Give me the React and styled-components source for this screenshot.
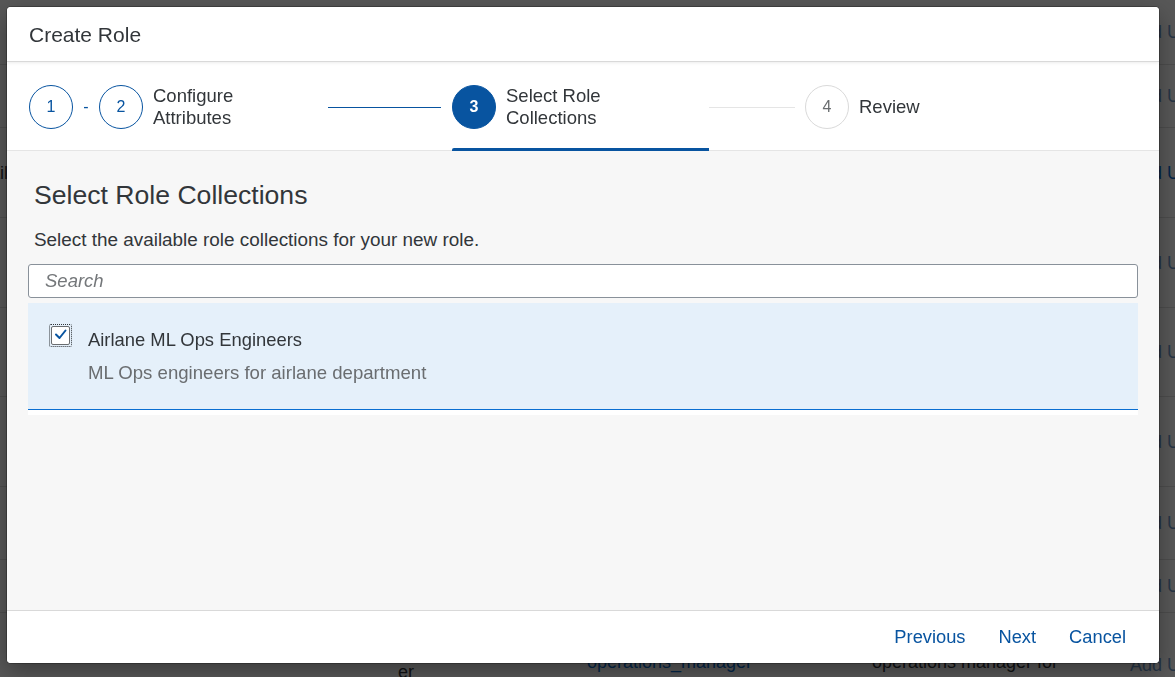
import React from "react";
import styled, { createGlobalStyle } from "styled-components";

const GlobalStyle = createGlobalStyle`
  html, body {
    margin: 0;
    padding: 0;
    width: 100%;
    height: 100%;
    overflow: hidden;
  }
  body {
    font-family: "Liberation Sans", Arial, sans-serif;
    background: #ffffff;
  }
`;

/* ---------- background page (behind the block layer) ---------- */
const Page = styled.div`
  width: 1175px;
  height: 677px;
  overflow: hidden;
  background: #ffffff;
`;

const BgRow = styled.div`
  display: grid;
  grid-template-columns: 436px 189px 285px 258px 1fr;
  margin-left: -38px;
  height: ${(p) => p.$h}px;
  box-sizing: border-box;
  align-items: ${(p) => (p.$top ? "start" : "center")};
  border-bottom: 1px solid #e0e0e0;
  font-size: 18px;
  line-height: 22px;
  color: #32363a;
`;

const BgCell = styled.div`
  padding-top: ${(p) => p.$pt || 0}px;
  white-space: nowrap;
`;

const BgLink = styled(BgCell)`
  color: ${(p) => (p.$strong ? "#0a6ed1" : "#6f9bcc")};
`;

const BlockLayer = styled.div`
  position: fixed;
  inset: 0;
  background: rgba(0, 0, 0, 0.66);
`;

/* ---------- dialog ---------- */
const Dialog = styled.div`
  position: fixed;
  left: 7px;
  top: 7px;
  width: 1152px;
  height: 656px;
  background: #ffffff;
  border-radius: 4px;
  overflow: hidden;
  display: flex;
  flex-direction: column;
  box-shadow: 0 0 0 1px rgba(0, 0, 0, 0.25), 0 8px 24px rgba(0, 0, 0, 0.35);
  color: #32363a;
  font-family: "Liberation Sans", Arial, sans-serif;
`;

const Header = styled.header`
  flex: none;
  height: 54px;
  box-sizing: border-box;
  display: flex;
  align-items: center;
  padding: 2px 0 0 22px;
  font-size: 21px;
  position: relative;
  z-index: 1;
  background: #ffffff;
  box-shadow: 0 1px 0 #d9d9d9, 0 2px 3px rgba(0, 0, 0, 0.08);
`;

const WizardNav = styled.nav`
  flex: none;
  height: 90px;
  box-sizing: border-box;
  display: flex;
  align-items: stretch;
  padding: 2px 0 0 22px;
  background: #ffffff;
  box-shadow: inset 0 -1px 0 #e5e5e5;
`;

const StepGroup = styled.div`
  flex: none;
  width: ${(p) => p.$w}px;
  display: flex;
  align-items: center;
  position: relative;
  &::after {
    content: "";
    display: ${(p) => (p.$active ? "block" : "none")};
    position: absolute;
    left: 0;
    right: 0;
    bottom: 0;
    height: 3px;
    background: #0854a0;
    border-top-left-radius: 2px;
  }
`;

const Circle = styled.span`
  flex: none;
  width: 44px;
  height: 44px;
  box-sizing: border-box;
  border-radius: 50%;
  display: flex;
  align-items: center;
  justify-content: center;
  font-size: 16px;
  font-weight: ${(p) => (p.$state === "current" ? 700 : 400)};
  border: 1px solid
    ${(p) => (p.$state === "pending" ? "#d9d9d9" : "#0854a0")};
  background: ${(p) => (p.$state === "current" ? "#0854a0" : "#ffffff")};
  color: ${(p) =>
    p.$state === "current"
      ? "#ffffff"
      : p.$state === "pending"
      ? "#6a6d70"
      : "#0854a0"};
`;

const Dash = styled.span`
  flex: none;
  width: 26px;
  text-align: center;
  color: #0854a0;
  font-size: 16px;
`;

const StepLabel = styled.span`
  margin-left: 10px;
  max-width: 110px;
  font-size: 18.5px;
  line-height: 22px;
  color: #32363a;
`;

const Connector = styled.span`
  flex: none;
  align-self: center;
  width: ${(p) => p.$w}px;
  height: 1px;
  margin-right: ${(p) => p.$mr}px;
  background: ${(p) => (p.$done ? "#0854a0" : "#e5e5e5")};
`;

const Content = styled.section`
  flex: 1;
  min-height: 0;
  background: #f7f7f7;
  padding: 29px 21px 0 21px;
  display: flex;
  flex-direction: column;
`;

const Title = styled.h2`
  margin: 0 0 0 6px;
  font-size: 26.6px;
  line-height: 30px;
  font-weight: 400;
  color: #32363a;
`;

const Description = styled.p`
  margin: 20px 0 0 6px;
  font-size: 18.9px;
  line-height: 20px;
  color: #32363a;
`;

const SearchInput = styled.input`
  margin-top: 14px;
  height: 34px;
  box-sizing: border-box;
  border: 1px solid #89919a;
  border-radius: 3px;
  background: #ffffff;
  padding: 0 16px;
  font-family: "Liberation Sans", Arial, sans-serif;
  font-size: 18.5px;
  color: #32363a;
  outline: none;
  &::placeholder {
    color: #74777a;
    font-style: italic;
  }
`;

const List = styled.ul`
  list-style: none;
  margin: 5px 0 0 0;
  padding: 0 0 5px 0;
  background: #ffffff;
`;

const ListItem = styled.li`
  height: 107px;
  box-sizing: border-box;
  display: flex;
  align-items: flex-start;
  padding: 21px 21px 0 21px;
  background: ${(p) => (p.$selected ? "#e5f0fa" : "#ffffff")};
  border-bottom: 1px solid ${(p) => (p.$selected ? "#0a6ed1" : "#e5e5e5")};
`;

const CheckOuter = styled.span`
  flex: none;
  width: 23px;
  height: 23px;
  box-sizing: border-box;
  border: 1px dotted #32363a;
  border-radius: 2px;
  display: flex;
  align-items: center;
  justify-content: center;
`;

const CheckInner = styled.span`
  width: 19px;
  height: 19px;
  box-sizing: border-box;
  border: 1px solid #6a6d70;
  border-radius: 2px;
  background: #ffffff;
  display: flex;
  align-items: center;
  justify-content: center;
`;

const ItemText = styled.div`
  margin: 5px 0 0 16px;
  display: flex;
  flex-direction: column;
  gap: 11px;
`;

const ItemTitle = styled.span`
  font-size: 18.4px;
  line-height: 22px;
  color: #32363a;
`;

const ItemDesc = styled.span`
  font-size: 18.6px;
  line-height: 22px;
  color: #6a6d70;
`;

const Footer = styled.footer`
  flex: none;
  height: 53px;
  box-sizing: border-box;
  border-top: 1px solid #d9d9d9;
  background: #ffffff;
  display: flex;
  align-items: center;
  justify-content: flex-end;
  gap: 17px;
  padding-right: 25px;
`;

const FooterButton = styled.button`
  background: none;
  border: none;
  padding: 0 8px;
  height: 36px;
  font-family: "Liberation Sans", Arial, sans-serif;
  font-size: 18.3px;
  color: #0854a0;
  cursor: pointer;
`;

const bgRows = [
  { h: 65 },
  { h: 63 },
  { h: 90, left: "Detail", strong: true },
  { h: 90 },
  { h: 89 },
  { h: 90 },
  { h: 73 },
  { h: 53 },
];

export default function App() {
  return (
    <>
      <GlobalStyle />
      <Page>
        {bgRows.map((r, i) => (
          <BgRow key={i} $h={r.h}>
            <BgCell>{r.left || ""}</BgCell>
            <BgCell />
            <BgCell />
            <BgCell />
            <BgLink $strong={r.strong}>Add User</BgLink>
          </BgRow>
        ))}
        <BgRow $h={80} $top>
          <BgCell />
          <BgCell $pt={26}>
            Operations Manag
            <br />
            er
          </BgCell>
          <BgLink $strong $pt={38}>
            operations_manager
          </BgLink>
          <BgCell $pt={38}>operations manager for</BgCell>
          <BgLink $pt={41}>Add User</BgLink>
        </BgRow>
      </Page>
      <BlockLayer />
      <Dialog role="dialog" aria-label="Create Role">
        <Header>Create Role</Header>
        <WizardNav>
          <StepGroup $w={299}>
            <Circle $state="done">1</Circle>
            <Dash>-</Dash>
            <Circle $state="done">2</Circle>
            <StepLabel>Configure Attributes</StepLabel>
          </StepGroup>
          <Connector $w={113} $mr={11} $done />
          <StepGroup $w={257} $active>
            <Circle $state="current">3</Circle>
            <StepLabel>Select Role Collections</StepLabel>
          </StepGroup>
          <Connector $w={86} $mr={10} />
          <StepGroup $w={200}>
            <Circle $state="pending">4</Circle>
            <StepLabel>Review</StepLabel>
          </StepGroup>
        </WizardNav>
        <Content>
          <Title>Select Role Collections</Title>
          <Description>
            Select the available role collections for your new role.
          </Description>
          <SearchInput placeholder="Search" />
          <List>
            <ListItem $selected>
              <CheckOuter>
                <CheckInner>
                  <svg width="17" height="17" viewBox="0 0 17 17">
                    <polyline
                      points="4,7.5 7.5,11 13.5,3.5"
                      fill="none"
                      stroke="#0854a0"
                      strokeWidth="2"
                      strokeLinecap="round"
                      strokeLinejoin="round"
                    />
                  </svg>
                </CheckInner>
              </CheckOuter>
              <ItemText>
                <ItemTitle>Airlane ML Ops Engineers</ItemTitle>
                <ItemDesc>ML Ops engineers for airlane department</ItemDesc>
              </ItemText>
            </ListItem>
          </List>
        </Content>
        <Footer>
          <FooterButton>Previous</FooterButton>
          <FooterButton>Next</FooterButton>
          <FooterButton>Cancel</FooterButton>
        </Footer>
      </Dialog>
    </>
  );
}
